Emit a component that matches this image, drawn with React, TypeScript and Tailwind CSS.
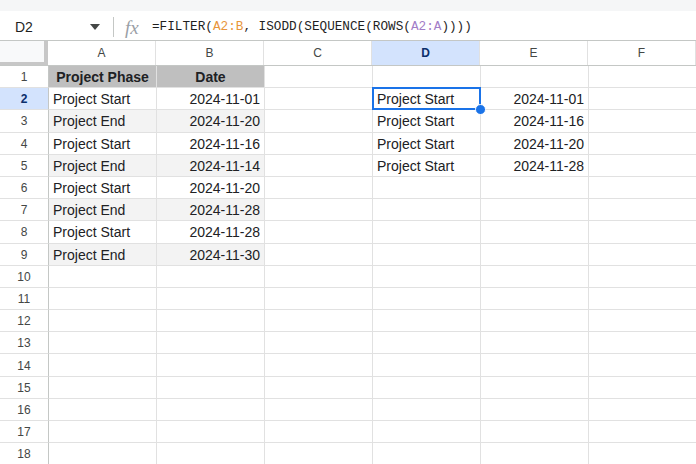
import React from "react";

const cols = ["A", "B", "C", "D", "E", "F"];

type Cell = { text?: string; align?: "left" | "right" | "center"; bold?: boolean; bg?: string };

const ab: [string, string][] = [
  ["Project Start", "2024-11-01"],
  ["Project End", "2024-11-20"],
  ["Project Start", "2024-11-16"],
  ["Project End", "2024-11-14"],
  ["Project Start", "2024-11-20"],
  ["Project End", "2024-11-28"],
  ["Project Start", "2024-11-28"],
  ["Project End", "2024-11-30"],
];

const de: [string, string][] = [
  ["Project Start", "2024-11-01"],
  ["Project Start", "2024-11-16"],
  ["Project Start", "2024-11-20"],
  ["Project Start", "2024-11-28"],
];

function buildRow(r: number): Cell[] {
  const row: Cell[] = [{}, {}, {}, {}, {}, {}];
  if (r === 1) {
    row[0] = { text: "Project Phase", align: "center", bold: true, bg: "bg-[#bfbfbf]" };
    row[1] = { text: "Date", align: "center", bold: true, bg: "bg-[#bfbfbf]" };
  } else if (r >= 2 && r <= 9) {
    const band = r % 2 === 1 ? "bg-[#f3f3f3]" : "";
    row[0] = { text: ab[r - 2][0], bg: band };
    row[1] = { text: ab[r - 2][1], align: "right", bg: band };
  }
  if (r >= 2 && r <= 5) {
    row[3] = { text: de[r - 2][0] };
    row[4] = { text: de[r - 2][1], align: "right" };
  }
  return row;
}

export default function App() {
  const rows = Array.from({ length: 18 }, (_, i) => i + 1);
  return (
    <div
      className="w-[696px] h-[464px] overflow-hidden bg-white text-[#202124]"
      style={{ fontFamily: '"Liberation Sans", Arial, sans-serif' }}
    >
      <div className="h-[11px] bg-[#f5f6f7]" />
      <div className="h-[30px] flex items-center pt-[3px] border-b border-[#c4c7c5] bg-white">
        <div className="w-[113px] flex items-center pl-[15px] pr-[13px] justify-between">
          <span className="text-[14px] text-[#1f1f1f]">D2</span>
          <svg width="10" height="6" viewBox="0 0 10 6">
            <path d="M0 0h10L5 6z" fill="#444746" />
          </svg>
        </div>
        <div className="w-px h-[20px] bg-[#c4c7c5]" />
        <span
          className="ml-[11px] w-[22px] text-[#9aa0a6] italic text-[19px] leading-none"
          style={{ fontFamily: '"Liberation Serif", "Times New Roman", serif' }}
        >
          fx
        </span>
        <span
          className="ml-[5px] text-[12.7px] text-[#1f1f1f] whitespace-pre"
          style={{ fontFamily: '"Liberation Mono", monospace' }}
        >
          =FILTER(<span className="text-[#e8953a]">A2:B</span>, ISODD(SEQUENCE(ROWS(
          <span className="text-[#a27cc7]">A2:A</span>))))
        </span>
      </div>

      <div className="flex h-[25px] border-b border-[#c4c7c5]">
        <div className="w-[49px] h-full bg-[#f8f9fa] border-r-[4px] border-b-[3px] border-[#c7c7c7]" />
        {cols.map((c) => (
          <div
            key={c}
            className={`w-[108px] shrink-0 h-full flex items-center justify-center text-[12px] border-r border-[#e1e1e1] ${
              c === "D" ? "bg-[#d3e3fd] font-bold text-[#0b2f6b]" : "text-[#444746]"
            }`}
          >
            {c}
          </div>
        ))}
      </div>

      {rows.map((r) => {
        const cells = buildRow(r);
        return (
          <div key={r} className="flex h-[22.2px]">
            <div
              className={`w-[49px] shrink-0 h-full flex items-center justify-center pt-[1px] text-[12px] border-r border-r-[#c4c7c5] border-b border-b-[#e1e1e1] ${
                r === 2 ? "bg-[#d3e3fd] font-bold text-[#0b2f6b]" : "text-[#444746]"
              }`}
            >
              {r}
            </div>
            {cells.map((cell, i) => {
              const selected = r === 2 && i === 3;
              return (
                <div
                  key={i}
                  className={`relative w-[108px] shrink-0 h-full flex items-center pt-[2px] px-[4px] text-[14px] border-r border-b border-[#e1e1e1] ${
                    cell.bg ?? ""
                  } ${
                    cell.align === "right"
                      ? "justify-end"
                      : cell.align === "center"
                      ? "justify-center"
                      : "justify-start"
                  } ${cell.bold ? "font-bold" : ""} ${selected ? "z-10" : ""}`}
                >
                  <span className="whitespace-nowrap">{cell.text}</span>
                  {selected && (
                    <>
                      <div className="absolute left-[-1px] top-[-1px] right-[-1px] bottom-[-1px] border-2 border-[#1a73e8]" />
                      <div className="absolute right-[-6px] bottom-[-6px] w-[11px] h-[11px] rounded-full bg-[#1a73e8] border border-white" />
                    </>
                  )}
                </div>
              );
            })}
          </div>
        );
      })}
    </div>
  );
}
